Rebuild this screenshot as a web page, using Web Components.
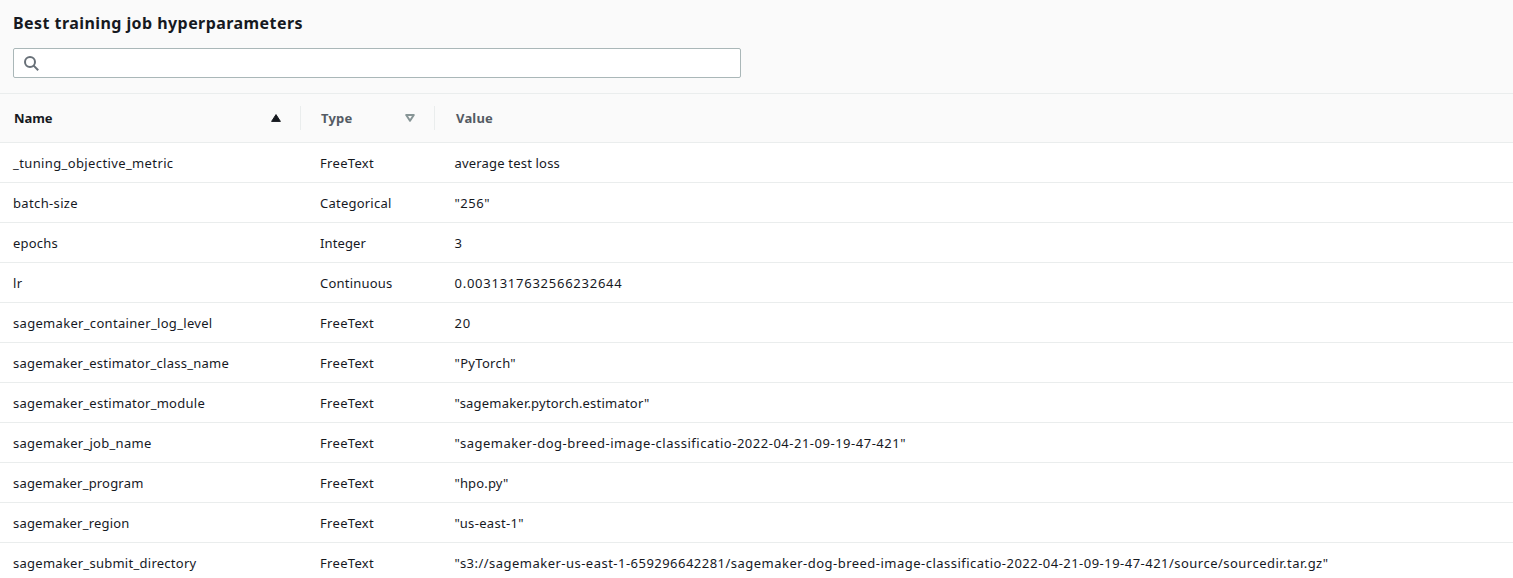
<!DOCTYPE html>
<html lang="en">
<head>
<meta charset="utf-8">
<title>Best training job hyperparameters</title>
<style>
html, body { margin: 0; height: 100%; overflow: hidden; background: #fff; }
body { font-family: "Noto Sans", "Open Sans", sans-serif; font-size: 13px; color: #16191f; }
</style>
</head>
<body>
<hyper-panel></hyper-panel>
<script>
// Text set to a fixed measure: tracking is spread evenly over its letters.
class FitText extends HTMLElement {
  connectedCallback() {
    const root = this.attachShadow({ mode: 'open' });
    root.innerHTML = '<style>:host{display:inline-block;white-space:pre}span{display:inline-block;font-variant-ligatures:none}</style><span><slot></slot></span>';
    const span = root.querySelector('span');
    const want = Number(this.getAttribute('measure'));
    const n = this.textContent.length;
    if (want && n) span.style.letterSpacing = ((want - span.getBoundingClientRect().width) / n).toFixed(3) + 'px';
  }
}

class SearchField extends HTMLElement {
  constructor() {
    super();
    this.attachShadow({ mode: 'open' }).innerHTML = `
      <style>
        :host { display: flex; align-items: center; box-sizing: border-box; width: 728px; height: 30px;
          padding-left: 10px; border: 1px solid #aab7b8; border-radius: 2px; background: #fff; }
        svg { display: block; }
      </style>
      <svg width="16" height="16" viewBox="0 0 16 16" fill="none" stroke="#687078" stroke-width="2">
        <circle cx="6" cy="7" r="5"/><path d="M9.4 10.4 14.2 15.2"/>
      </svg>`;
  }
}

class SortMark extends HTMLElement {
  constructor() {
    super();
    const up = this.getAttribute('dir') === 'up';
    this.attachShadow({ mode: 'open' }).innerHTML = `
      <style>:host { display: block; width: 10px; height: 8px; } svg { display: block; }</style>
      <svg width="10" height="8" viewBox="0 0 10 8">${up
        ? '<path d="M5 .6 9.4 7.4H.6Z" fill="#16191f" stroke="#16191f" stroke-width="1" stroke-linejoin="round"/>'
        : '<path d="M1.2 1H8.8L5 6.8Z" fill="none" stroke="#879596" stroke-width="2" stroke-linejoin="round"/>'}</svg>`;
  }
}

class HeadCell extends HTMLElement {
  constructor() {
    super();
    this.attachShadow({ mode: 'open' }).innerHTML = `
      <style>
        :host { display: flex; align-items: center; justify-content: space-between; box-sizing: border-box;
          height: 24px; line-height: 24px; font-weight: 700; color: #545b64; }
        :host([active]) { color: #16191f; }
        :host([divided]) { border-right: 1px solid #eaeded; }
      </style><slot></slot><slot name="sort"></slot>`;
  }
}
class ParamRow extends HTMLElement {
  constructor() {
    super();
    this.attachShadow({ mode: 'open' }).innerHTML = `
      <style>
        :host { display: grid; grid-template-columns: 307px 134.5px 1fr; box-sizing: border-box; height: 40px;
          padding-left: 13px; line-height: 40px; border-bottom: 1px solid #eaeded; white-space: nowrap; }
      </style><slot></slot>`;
  }
}

const ROWS = [
  ['_tuning_objective_metric', 160.5, 'FreeText', 54, 'average test loss', 105.5],
  ['batch-size', 65, 'Categorical', 71.5, '"256"', 35.5],
  ['epochs', 45, 'Integer', 46, '3', 8],
  ['lr', 9.5, 'Continuous', 72.5, '0.0031317632566232644', 168],
  ['sagemaker_container_log_level', 199.5, 'FreeText', 54, '20', 16.5],
  ['sagemaker_estimator_class_name', 216, 'FreeText', 54, '"PyTorch"', 61.5],
  ['sagemaker_estimator_module', 192, 'FreeText', 54, '"sagemaker.pytorch.estimator"', 195],
  ['sagemaker_job_name', 138.5, 'FreeText', 54, '"sagemaker-dog-breed-image-classificatio-2022-04-21-09-19-47-421"', 451.5],
  ['sagemaker_program', 130.5, 'FreeText', 54, '"hpo.py"', 54],
  ['sagemaker_region', 116.5, 'FreeText', 54, '"us-east-1"', 69.5],
  ['sagemaker_submit_directory', 183.5, 'FreeText', 54, '"s3://sagemaker-us-east-1-659296642281/sagemaker-dog-breed-image-classificatio-2022-04-21-09-19-47-421/source/sourcedir.tar.gz"', 874]
];

class HyperPanel extends HTMLElement {
  connectedCallback() {
    const cell = (text, width) => `<fit-text measure="${width}">${text}</fit-text>`;
    this.attachShadow({ mode: 'open' }).innerHTML = `
      <style>
        :host { display: block; }
        header { box-sizing: border-box; height: 94px; padding: 11px 13px 0; background: #fafafa; border-bottom: 1px solid #eaeded; }
        h2 { margin: 0 0 13px; font-size: 16px; line-height: 24px; font-weight: 700; }
        .heads { display: grid; grid-template-columns: 287px 134px 1fr; align-items: center; box-sizing: border-box;
          height: 49px; padding-left: 14px; background: #fafafa; border-bottom: 1px solid #eaeded; }
        .type { padding-left: 20px; padding-right: 19px; }
        .name { padding-right: 19px; }
        .value { padding-left: 21px; }
      </style>
      <header><h2>${cell('Best training job hyperparameters', 290)}</h2><search-field></search-field></header>
      <div class="heads">
        <head-cell class="name" active divided>${cell('Name', 38.5)}<sort-mark slot="sort" dir="up"></sort-mark></head-cell>
        <head-cell class="type" divided>${cell('Type', 31.5)}<sort-mark slot="sort" dir="down"></sort-mark></head-cell>
        <head-cell class="value">${cell('Value', 37)}</head-cell>
      </div>
      ${ROWS.map(r => `<param-row>${cell(r[0], r[1])}${cell(r[2], r[3])}${cell(r[4], r[5])}</param-row>`).join('')}`;
  }
}
customElements.define('search-field', SearchField);
customElements.define('sort-mark', SortMark);
customElements.define('head-cell', HeadCell);
customElements.define('param-row', ParamRow);
customElements.define('fit-text', FitText);
customElements.define('hyper-panel', HyperPanel);
</script>
</body>
</html>
